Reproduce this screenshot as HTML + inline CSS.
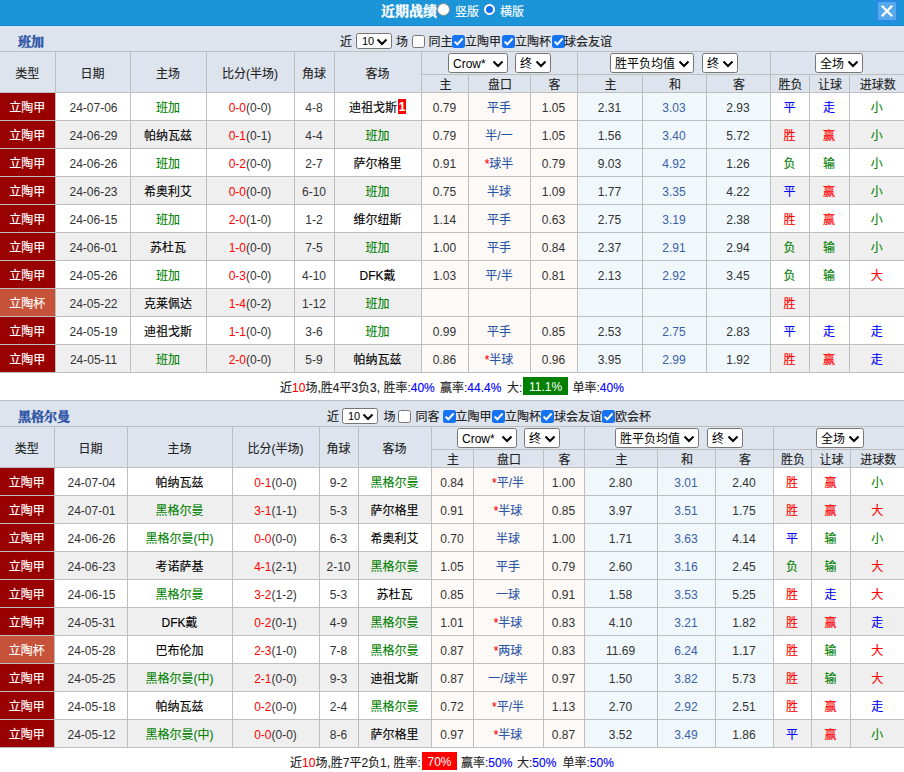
<!DOCTYPE html>
<html lang="zh-CN"><head><meta charset="utf-8"><title>近期战绩</title>
<style>
*{box-sizing:border-box;margin:0;padding:0}
html,body{width:904px;height:772px;overflow:hidden;background:#fff}
body{font-family:"Liberation Sans","Noto Sans CJK SC",sans-serif;font-size:12px;color:#333;position:relative}
.bar{position:absolute;left:0;top:0;width:904px;height:26px;background:#1b95d7;z-index:2;border-bottom:1px solid #0f8bd0}
.bt{-webkit-text-stroke:0.4px #fff;position:absolute;left:381px;top:3px;font-size:14px;font-weight:bold;color:#fff;line-height:18px;white-space:nowrap;font-family:"Liberation Serif","Noto Serif CJK SC",serif;letter-spacing:0}
.rd{position:absolute;width:13px;height:13px;border-radius:50%;background:#fff;top:3px}
.rd.on{left:437px;top:3px;border:1px solid #8a8a8a}
.rd.off{left:483px;top:3px;border:1px solid #1f86d8;background:#fff}
.rl{position:absolute;top:4px;color:#fff;font-size:12px;line-height:16px;white-space:nowrap}
.rl1{left:455px}.rl2{left:500px}
.close{position:absolute;left:876px;top:0;width:22px;height:22px;background:#288ae2}
.close svg{display:block}
table.t{position:absolute;left:0;width:904px;border-collapse:collapse;table-layout:fixed}
table.t1{top:25px}
table.t2{top:400px}
.t td,.t th{border:1px solid #bebebe;text-align:center;vertical-align:middle;font-weight:normal;white-space:nowrap;overflow:hidden;padding:0}
.t tr>*:first-child{border-left:none}
.t tr>*:last-child{border-right:none}
.ttl td{height:26px;background:#dde4ed;text-align:left;position:relative;border-left:none;border-right:none}
.nm{position:absolute;left:18px;top:8px;font-size:13px;font-weight:bold;color:#2b52a5;line-height:16px;-webkit-text-stroke:0.45px #2b52a5;font-family:"Liberation Serif","Noto Serif CJK SC",serif}
.opts{position:absolute;top:0;height:25px;line-height:25px;color:#222;font-size:12px;white-space:pre;display:flex;align-items:center}
.opts1{left:340px}.opts2{left:327px}
.h1 th,.h2 th{background:#dde4ed;color:#222}
.h1 th{height:23px}
.h2 th{height:18px;line-height:14px;padding-top:3px;padding-left:2px}
.t tr td{height:28px}
.t tr.ttl td{height:26px}
.lg{background:#990000;color:#fff}
.lg.cup{background:#c6523a}
tr.alt td{background:#efefef}
tr.alt td.lg{background:#990000}
tr.alt td.lg.cup{background:#c6523a}
td.o1,tr.alt td.o1{background:#fdf9f6}
td.o2,tr.alt td.o2{background:#f0f8fc}
td.hc{color:#2a55a5}
td.dr{color:#3a5fa8}
td.tm{color:#000}
.g{color:#008000}.r{color:#f00}.b{color:#00f}
.rc{display:inline-block;background:#f00;color:#fff;font-weight:bold;width:8px;height:15px;line-height:16px;vertical-align:-2px;text-align:center;margin-left:1px;font-size:12px;overflow:hidden}
.sum td{height:27px;border:none!important;background:#fff;text-align:left}
.sm{display:inline-block;white-space:pre;color:#222;line-height:27px}
.sm1{margin-left:280px}.sm2{margin-left:290px}
.sg{position:absolute;font-size:12px;line-height:16px;color:#222;white-space:pre}
.bx{position:absolute;height:18px;line-height:18px;padding-top:1px;text-align:center;color:#fff;font-size:12px}
.bg-g{background:#008000}
.bg-r{background:#f00}
.cb{position:absolute;width:13px;height:13px;border:1px solid #767676;border-radius:2.5px;background:#fff}
.cb.on{background:#1673f2;border:none}
.cb svg{display:block}
.lb{position:absolute;font-size:12px;line-height:16px;color:#222;white-space:nowrap}
.sel{position:absolute;border:1px solid #767676;border-radius:2.5px;background:#fff;color:#000;font-size:12px}
.sel.sn{font-size:11px}
.sel.sn .st{left:5px;margin-top:-8px}
.sel.sn .ar{right:3px}
td.d,td.o1,td.o2,td.sc{padding-top:2px}
td.hc{padding-top:0}
.sel .st{position:absolute;left:4px;top:50%;line-height:16px;margin-top:-7px;white-space:nowrap}
.sel .ar{position:absolute;right:3px;top:50%;margin-top:-3.5px}
.rd.off:after{content:"";position:absolute;left:2px;top:2px;width:7px;height:7px;border-radius:50%;background:#0b6cf5}
td.dt{padding-left:2px}
td.tm,td.rs,td.lg,td.hc,.h1 th,.h2 th,.lb,.sg,.rl{-webkit-text-stroke:0.12px}

</style></head><body>
<div class="bar"><span class="bt">近期战绩</span><span class="rd on"></span><span class="rl rl1">竖版</span><span class="rd off"></span><span class="rl rl2">横版</span>
<span class="close"><svg viewBox="0 0 22 22" width="22" height="22"><rect x="2" y="2" width="18" height="18" fill="#55a8ea"/><path d="M5.8 5.8 L16.2 16.2 M16.2 5.8 L5.8 16.2" stroke="#fff" stroke-width="2.3" fill="none"/></svg></span></div>
<table class="t t1">
<colgroup><col style="width:55px"><col style="width:75px"><col style="width:76px"><col style="width:88px"><col style="width:40px"><col style="width:87px"><col style="width:47px"><col style="width:62px"><col style="width:47px"><col style="width:65px"><col style="width:64px"><col style="width:64px"><col style="width:39px"><col style="width:40px"><col style="width:55px"></colgroup>
<tr class="ttl"><td colspan="15"><span class="nm">班加</span></td></tr>
<tr class="h1"><th rowspan="2">类型</th><th rowspan="2">日期</th><th rowspan="2">主场</th><th rowspan="2">比分(半场)</th><th rowspan="2">角球</th><th rowspan="2">客场</th>
<th colspan="3" class="hs"></th><th colspan="3" class="hs"></th><th colspan="3" class="hs"></th></tr>
<tr class="h2"><th>主</th><th>盘口</th><th>客</th><th>主</th><th>和</th><th>客</th><th>胜负</th><th>让球</th><th>进球数</th></tr>
<tr><td class="lg">立陶甲</td><td class="d dt">24-07-06</td><td class="tm"><span class="g">班加</span></td><td class="sc"><span class="r">0-0</span>(0-0)</td><td class="d">4-8</td><td class="tm"><span>迪祖戈斯</span><span class="rc">1</span></td><td class="o1">0.79</td><td class="o1 hc">平手</td><td class="o1">1.05</td><td class="o2">2.31</td><td class="o2 dr">3.03</td><td class="o2">2.93</td><td class="rs"><span class="b">平</span></td><td class="rs"><span class="b">走</span></td><td class="rs"><span class="g">小</span></td></tr>
<tr class="alt"><td class="lg">立陶甲</td><td class="d dt">24-06-29</td><td class="tm"><span>帕纳瓦兹</span></td><td class="sc"><span class="r">0-1</span>(0-1)</td><td class="d">4-4</td><td class="tm"><span class="g">班加</span></td><td class="o1">0.79</td><td class="o1 hc">半/一</td><td class="o1">1.05</td><td class="o2">1.56</td><td class="o2 dr">3.40</td><td class="o2">5.72</td><td class="rs"><span class="r">胜</span></td><td class="rs"><span class="r">赢</span></td><td class="rs"><span class="g">小</span></td></tr>
<tr><td class="lg">立陶甲</td><td class="d dt">24-06-26</td><td class="tm"><span class="g">班加</span></td><td class="sc"><span class="r">0-2</span>(0-0)</td><td class="d">2-7</td><td class="tm"><span>萨尔格里</span></td><td class="o1">0.91</td><td class="o1 hc"><span class="r">*</span>球半</td><td class="o1">0.79</td><td class="o2">9.03</td><td class="o2 dr">4.92</td><td class="o2">1.26</td><td class="rs"><span class="g">负</span></td><td class="rs"><span class="g">输</span></td><td class="rs"><span class="g">小</span></td></tr>
<tr class="alt"><td class="lg">立陶甲</td><td class="d dt">24-06-23</td><td class="tm"><span>希奥利艾</span></td><td class="sc"><span class="r">0-0</span>(0-0)</td><td class="d">6-10</td><td class="tm"><span class="g">班加</span></td><td class="o1">0.75</td><td class="o1 hc">半球</td><td class="o1">1.09</td><td class="o2">1.77</td><td class="o2 dr">3.35</td><td class="o2">4.22</td><td class="rs"><span class="b">平</span></td><td class="rs"><span class="r">赢</span></td><td class="rs"><span class="g">小</span></td></tr>
<tr><td class="lg">立陶甲</td><td class="d dt">24-06-15</td><td class="tm"><span class="g">班加</span></td><td class="sc"><span class="r">2-0</span>(1-0)</td><td class="d">1-2</td><td class="tm"><span>维尔纽斯</span></td><td class="o1">1.14</td><td class="o1 hc">平手</td><td class="o1">0.63</td><td class="o2">2.75</td><td class="o2 dr">3.19</td><td class="o2">2.38</td><td class="rs"><span class="r">胜</span></td><td class="rs"><span class="r">赢</span></td><td class="rs"><span class="g">小</span></td></tr>
<tr class="alt"><td class="lg">立陶甲</td><td class="d dt">24-06-01</td><td class="tm"><span>苏杜瓦</span></td><td class="sc"><span class="r">1-0</span>(0-0)</td><td class="d">7-5</td><td class="tm"><span class="g">班加</span></td><td class="o1">1.00</td><td class="o1 hc">平手</td><td class="o1">0.84</td><td class="o2">2.37</td><td class="o2 dr">2.91</td><td class="o2">2.94</td><td class="rs"><span class="g">负</span></td><td class="rs"><span class="g">输</span></td><td class="rs"><span class="g">小</span></td></tr>
<tr><td class="lg">立陶甲</td><td class="d dt">24-05-26</td><td class="tm"><span class="g">班加</span></td><td class="sc"><span class="r">0-3</span>(0-0)</td><td class="d">4-10</td><td class="tm"><span>DFK戴</span></td><td class="o1">1.03</td><td class="o1 hc">平/半</td><td class="o1">0.81</td><td class="o2">2.13</td><td class="o2 dr">2.92</td><td class="o2">3.45</td><td class="rs"><span class="g">负</span></td><td class="rs"><span class="g">输</span></td><td class="rs"><span class="r">大</span></td></tr>
<tr class="alt"><td class="lg cup">立陶杯</td><td class="d dt">24-05-22</td><td class="tm"><span>克莱佩达</span></td><td class="sc"><span class="r">1-4</span>(0-2)</td><td class="d">1-12</td><td class="tm"><span class="g">班加</span></td><td class="o1"></td><td class="o1 hc"></td><td class="o1"></td><td class="o2"></td><td class="o2 dr"></td><td class="o2"></td><td class="rs"><span class="r">胜</span></td><td class="rs"><span></span></td><td class="rs"><span></span></td></tr>
<tr><td class="lg">立陶甲</td><td class="d dt">24-05-19</td><td class="tm"><span>迪祖戈斯</span></td><td class="sc"><span class="r">1-1</span>(0-0)</td><td class="d">3-6</td><td class="tm"><span class="g">班加</span></td><td class="o1">0.99</td><td class="o1 hc">平手</td><td class="o1">0.85</td><td class="o2">2.53</td><td class="o2 dr">2.75</td><td class="o2">2.83</td><td class="rs"><span class="b">平</span></td><td class="rs"><span class="b">走</span></td><td class="rs"><span class="b">走</span></td></tr>
<tr class="alt"><td class="lg">立陶甲</td><td class="d dt">24-05-11</td><td class="tm"><span class="g">班加</span></td><td class="sc"><span class="r">2-0</span>(0-0)</td><td class="d">5-9</td><td class="tm"><span>帕纳瓦兹</span></td><td class="o1">0.86</td><td class="o1 hc"><span class="r">*</span>半球</td><td class="o1">0.96</td><td class="o2">3.95</td><td class="o2 dr">2.99</td><td class="o2">1.92</td><td class="rs"><span class="r">胜</span></td><td class="rs"><span class="r">赢</span></td><td class="rs"><span class="b">走</span></td></tr>
<tr class="sum"><td colspan="15"><span class="sm sm1"></span></td></tr>
</table><span class="lb" style="left:340px;top:34px">近</span><span class="sel sn" style="left:356px;top:33px;width:36px;height:16px"><span class="st">10</span><svg class="ar" viewBox="0 0 12 8" width="12" height="8"><path d="M1.5 1.5 L6 6 L10.5 1.5" fill="none" stroke="#000" stroke-width="2"/></svg></span><span class="lb" style="left:396px;top:34px">场</span><span class="cb" style="left:412px;top:35px"></span><span class="lb" style="left:428.5px;top:34px">同主</span><span class="cb on" style="left:452px;top:35px"><svg viewBox="0 0 13 13" width="13" height="13"><path d="M2.6 6.6 L5.3 9.3 L10.6 3.5" fill="none" stroke="#fff" stroke-width="2" stroke-linecap="butt" stroke-linejoin="miter"/></svg></span><span class="lb" style="left:465px;top:34px">立陶甲</span><span class="cb on" style="left:502px;top:35px"><svg viewBox="0 0 13 13" width="13" height="13"><path d="M2.6 6.6 L5.3 9.3 L10.6 3.5" fill="none" stroke="#fff" stroke-width="2" stroke-linecap="butt" stroke-linejoin="miter"/></svg></span><span class="lb" style="left:515px;top:34px">立陶杯</span><span class="cb on" style="left:551.5px;top:35px"><svg viewBox="0 0 13 13" width="13" height="13"><path d="M2.6 6.6 L5.3 9.3 L10.6 3.5" fill="none" stroke="#fff" stroke-width="2" stroke-linecap="butt" stroke-linejoin="miter"/></svg></span><span class="lb" style="left:564px;top:34px">球会友谊</span><span class="sel" style="left:448px;top:53px;width:60px;height:20px"><span class="st">Crow*</span><svg class="ar" viewBox="0 0 12 8" width="12" height="8"><path d="M1.5 1.5 L6 6 L10.5 1.5" fill="none" stroke="#000" stroke-width="2"/></svg></span><span class="sel" style="left:515px;top:53px;width:36px;height:20px"><span class="st">终</span><svg class="ar" viewBox="0 0 12 8" width="12" height="8"><path d="M1.5 1.5 L6 6 L10.5 1.5" fill="none" stroke="#000" stroke-width="2"/></svg></span><span class="sel" style="left:610px;top:53px;width:84px;height:20px"><span class="st">胜平负均值</span><svg class="ar" viewBox="0 0 12 8" width="12" height="8"><path d="M1.5 1.5 L6 6 L10.5 1.5" fill="none" stroke="#000" stroke-width="2"/></svg></span><span class="sel" style="left:702px;top:53px;width:36px;height:20px"><span class="st">终</span><svg class="ar" viewBox="0 0 12 8" width="12" height="8"><path d="M1.5 1.5 L6 6 L10.5 1.5" fill="none" stroke="#000" stroke-width="2"/></svg></span><span class="sel" style="left:815px;top:53px;width:48px;height:20px"><span class="st">全场</span><svg class="ar" viewBox="0 0 12 8" width="12" height="8"><path d="M1.5 1.5 L6 6 L10.5 1.5" fill="none" stroke="#000" stroke-width="2"/></svg></span><span class="sg" style="left:280px;top:380px">近<span class="r">10</span>场,胜4平3负3, 胜率:<span class="b">40%</span></span><span class="sg" style="left:440px;top:380px">赢率:<span class="b">44.4%</span></span><span class="sg" style="left:507px;top:380px">大:</span><span class="bx bg-g" style="left:523px;top:377px;width:45px">11.1%</span><span class="sg" style="left:572.5px;top:380px">单率:<span class="b">40%</span></span>
<table class="t t2">
<colgroup><col style="width:54px"><col style="width:73px"><col style="width:105px"><col style="width:87px"><col style="width:39px"><col style="width:73px"><col style="width:42px"><col style="width:70px"><col style="width:41px"><col style="width:73px"><col style="width:58px"><col style="width:58px"><col style="width:38px"><col style="width:39px"><col style="width:54px"></colgroup>
<tr class="ttl"><td colspan="15"><span class="nm">黑格尔曼</span></td></tr>
<tr class="h1"><th rowspan="2">类型</th><th rowspan="2">日期</th><th rowspan="2">主场</th><th rowspan="2">比分(半场)</th><th rowspan="2">角球</th><th rowspan="2">客场</th>
<th colspan="3" class="hs"></th><th colspan="3" class="hs"></th><th colspan="3" class="hs"></th></tr>
<tr class="h2"><th>主</th><th>盘口</th><th>客</th><th>主</th><th>和</th><th>客</th><th>胜负</th><th>让球</th><th>进球数</th></tr>
<tr><td class="lg">立陶甲</td><td class="d dt">24-07-04</td><td class="tm"><span>帕纳瓦兹</span></td><td class="sc"><span class="r">0-1</span>(0-0)</td><td class="d">9-2</td><td class="tm"><span class="g">黑格尔曼</span></td><td class="o1">0.84</td><td class="o1 hc"><span class="r">*</span>平/半</td><td class="o1">1.00</td><td class="o2">2.80</td><td class="o2 dr">3.01</td><td class="o2">2.40</td><td class="rs"><span class="r">胜</span></td><td class="rs"><span class="r">赢</span></td><td class="rs"><span class="g">小</span></td></tr>
<tr class="alt"><td class="lg">立陶甲</td><td class="d dt">24-07-01</td><td class="tm"><span class="g">黑格尔曼</span></td><td class="sc"><span class="r">3-1</span>(1-1)</td><td class="d">5-3</td><td class="tm"><span>萨尔格里</span></td><td class="o1">0.91</td><td class="o1 hc"><span class="r">*</span>半球</td><td class="o1">0.85</td><td class="o2">3.97</td><td class="o2 dr">3.51</td><td class="o2">1.75</td><td class="rs"><span class="r">胜</span></td><td class="rs"><span class="r">赢</span></td><td class="rs"><span class="r">大</span></td></tr>
<tr><td class="lg">立陶甲</td><td class="d dt">24-06-26</td><td class="tm"><span class="g">黑格尔曼(中)</span></td><td class="sc"><span class="r">0-0</span>(0-0)</td><td class="d">6-3</td><td class="tm"><span>希奥利艾</span></td><td class="o1">0.70</td><td class="o1 hc">半球</td><td class="o1">1.00</td><td class="o2">1.71</td><td class="o2 dr">3.63</td><td class="o2">4.14</td><td class="rs"><span class="b">平</span></td><td class="rs"><span class="g">输</span></td><td class="rs"><span class="g">小</span></td></tr>
<tr class="alt"><td class="lg">立陶甲</td><td class="d dt">24-06-23</td><td class="tm"><span>考诺萨基</span></td><td class="sc"><span class="r">4-1</span>(2-1)</td><td class="d">2-10</td><td class="tm"><span class="g">黑格尔曼</span></td><td class="o1">1.05</td><td class="o1 hc">平手</td><td class="o1">0.79</td><td class="o2">2.60</td><td class="o2 dr">3.16</td><td class="o2">2.45</td><td class="rs"><span class="g">负</span></td><td class="rs"><span class="g">输</span></td><td class="rs"><span class="r">大</span></td></tr>
<tr><td class="lg">立陶甲</td><td class="d dt">24-06-15</td><td class="tm"><span class="g">黑格尔曼</span></td><td class="sc"><span class="r">3-2</span>(1-2)</td><td class="d">5-3</td><td class="tm"><span>苏杜瓦</span></td><td class="o1">0.85</td><td class="o1 hc">一球</td><td class="o1">0.91</td><td class="o2">1.58</td><td class="o2 dr">3.53</td><td class="o2">5.25</td><td class="rs"><span class="r">胜</span></td><td class="rs"><span class="b">走</span></td><td class="rs"><span class="r">大</span></td></tr>
<tr class="alt"><td class="lg">立陶甲</td><td class="d dt">24-05-31</td><td class="tm"><span>DFK戴</span></td><td class="sc"><span class="r">0-2</span>(0-1)</td><td class="d">4-9</td><td class="tm"><span class="g">黑格尔曼</span></td><td class="o1">1.01</td><td class="o1 hc"><span class="r">*</span>半球</td><td class="o1">0.83</td><td class="o2">4.10</td><td class="o2 dr">3.21</td><td class="o2">1.82</td><td class="rs"><span class="r">胜</span></td><td class="rs"><span class="r">赢</span></td><td class="rs"><span class="b">走</span></td></tr>
<tr><td class="lg cup">立陶杯</td><td class="d dt">24-05-28</td><td class="tm"><span>巴布伦加</span></td><td class="sc"><span class="r">2-3</span>(1-0)</td><td class="d">7-8</td><td class="tm"><span class="g">黑格尔曼</span></td><td class="o1">0.87</td><td class="o1 hc"><span class="r">*</span>两球</td><td class="o1">0.83</td><td class="o2">11.69</td><td class="o2 dr">6.24</td><td class="o2">1.17</td><td class="rs"><span class="r">胜</span></td><td class="rs"><span class="g">输</span></td><td class="rs"><span class="r">大</span></td></tr>
<tr class="alt"><td class="lg">立陶甲</td><td class="d dt">24-05-25</td><td class="tm"><span class="g">黑格尔曼(中)</span></td><td class="sc"><span class="r">2-1</span>(0-0)</td><td class="d">9-3</td><td class="tm"><span>迪祖戈斯</span></td><td class="o1">0.87</td><td class="o1 hc">一/球半</td><td class="o1">0.97</td><td class="o2">1.50</td><td class="o2 dr">3.82</td><td class="o2">5.73</td><td class="rs"><span class="r">胜</span></td><td class="rs"><span class="g">输</span></td><td class="rs"><span class="r">大</span></td></tr>
<tr><td class="lg">立陶甲</td><td class="d dt">24-05-18</td><td class="tm"><span>帕纳瓦兹</span></td><td class="sc"><span class="r">0-2</span>(0-0)</td><td class="d">2-4</td><td class="tm"><span class="g">黑格尔曼</span></td><td class="o1">0.72</td><td class="o1 hc"><span class="r">*</span>平/半</td><td class="o1">1.13</td><td class="o2">2.70</td><td class="o2 dr">2.92</td><td class="o2">2.51</td><td class="rs"><span class="r">胜</span></td><td class="rs"><span class="r">赢</span></td><td class="rs"><span class="b">走</span></td></tr>
<tr class="alt"><td class="lg">立陶甲</td><td class="d dt">24-05-12</td><td class="tm"><span class="g">黑格尔曼(中)</span></td><td class="sc"><span class="r">0-0</span>(0-0)</td><td class="d">8-6</td><td class="tm"><span>萨尔格里</span></td><td class="o1">0.97</td><td class="o1 hc"><span class="r">*</span>半球</td><td class="o1">0.87</td><td class="o2">3.52</td><td class="o2 dr">3.49</td><td class="o2">1.86</td><td class="rs"><span class="b">平</span></td><td class="rs"><span class="r">赢</span></td><td class="rs"><span class="g">小</span></td></tr>
<tr class="sum"><td colspan="15"><span class="sm sm2"></span></td></tr>
</table><span class="lb" style="left:327px;top:409px">近</span><span class="sel sn" style="left:342px;top:408px;width:36px;height:16px"><span class="st">10</span><svg class="ar" viewBox="0 0 12 8" width="12" height="8"><path d="M1.5 1.5 L6 6 L10.5 1.5" fill="none" stroke="#000" stroke-width="2"/></svg></span><span class="lb" style="left:383.5px;top:409px">场</span><span class="cb" style="left:398px;top:410px"></span><span class="lb" style="left:415.5px;top:409px">同客</span><span class="cb on" style="left:443px;top:410px"><svg viewBox="0 0 13 13" width="13" height="13"><path d="M2.6 6.6 L5.3 9.3 L10.6 3.5" fill="none" stroke="#fff" stroke-width="2" stroke-linecap="butt" stroke-linejoin="miter"/></svg></span><span class="lb" style="left:455.5px;top:409px">立陶甲</span><span class="cb on" style="left:492px;top:410px"><svg viewBox="0 0 13 13" width="13" height="13"><path d="M2.6 6.6 L5.3 9.3 L10.6 3.5" fill="none" stroke="#fff" stroke-width="2" stroke-linecap="butt" stroke-linejoin="miter"/></svg></span><span class="lb" style="left:505px;top:409px">立陶杯</span><span class="cb on" style="left:541px;top:410px"><svg viewBox="0 0 13 13" width="13" height="13"><path d="M2.6 6.6 L5.3 9.3 L10.6 3.5" fill="none" stroke="#fff" stroke-width="2" stroke-linecap="butt" stroke-linejoin="miter"/></svg></span><span class="lb" style="left:554px;top:409px">球会友谊</span><span class="cb on" style="left:602px;top:410px"><svg viewBox="0 0 13 13" width="13" height="13"><path d="M2.6 6.6 L5.3 9.3 L10.6 3.5" fill="none" stroke="#fff" stroke-width="2" stroke-linecap="butt" stroke-linejoin="miter"/></svg></span><span class="lb" style="left:615px;top:409px">欧会杯</span><span class="sel" style="left:457px;top:428px;width:60px;height:20px"><span class="st">Crow*</span><svg class="ar" viewBox="0 0 12 8" width="12" height="8"><path d="M1.5 1.5 L6 6 L10.5 1.5" fill="none" stroke="#000" stroke-width="2"/></svg></span><span class="sel" style="left:524px;top:428px;width:36px;height:20px"><span class="st">终</span><svg class="ar" viewBox="0 0 12 8" width="12" height="8"><path d="M1.5 1.5 L6 6 L10.5 1.5" fill="none" stroke="#000" stroke-width="2"/></svg></span><span class="sel" style="left:615px;top:428px;width:84px;height:20px"><span class="st">胜平负均值</span><svg class="ar" viewBox="0 0 12 8" width="12" height="8"><path d="M1.5 1.5 L6 6 L10.5 1.5" fill="none" stroke="#000" stroke-width="2"/></svg></span><span class="sel" style="left:707px;top:428px;width:36px;height:20px"><span class="st">终</span><svg class="ar" viewBox="0 0 12 8" width="12" height="8"><path d="M1.5 1.5 L6 6 L10.5 1.5" fill="none" stroke="#000" stroke-width="2"/></svg></span><span class="sel" style="left:816px;top:428px;width:48px;height:20px"><span class="st">全场</span><svg class="ar" viewBox="0 0 12 8" width="12" height="8"><path d="M1.5 1.5 L6 6 L10.5 1.5" fill="none" stroke="#000" stroke-width="2"/></svg></span><span class="sg" style="left:290px;top:755px">近<span class="r">10</span>场,胜7平2负1, 胜率:</span><span class="bx bg-r" style="left:422px;top:752px;width:35px">70%</span><span class="sg" style="left:461px;top:755px">赢率:<span class="b">50%</span></span><span class="sg" style="left:517px;top:755px">大:<span class="b">50%</span></span><span class="sg" style="left:562.5px;top:755px">单率:<span class="b">50%</span></span>
</body></html>
